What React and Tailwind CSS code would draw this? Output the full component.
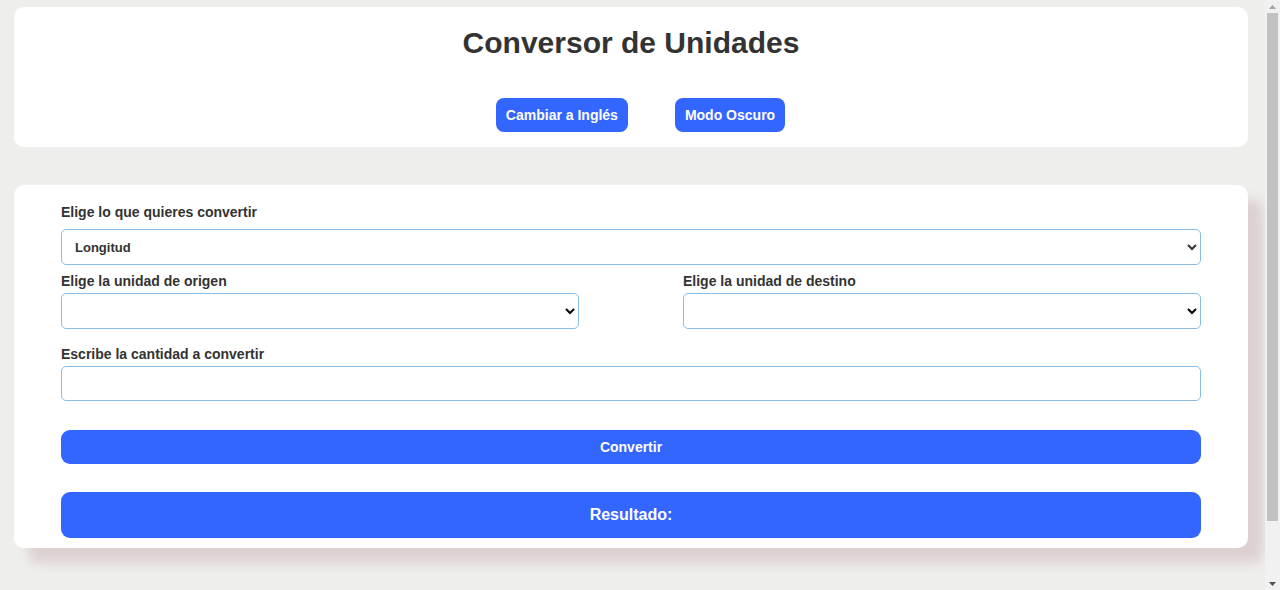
import React from 'react';

function Field({ label, children, className = '' }) {
  return (
    <div className={className}>
      <label className="block text-[14px] font-bold leading-4 text-[#333] mb-[4px]">{label}</label>
      {children}
    </div>
  );
}

// barra de desplazamiento dibujada (como en la captura)
function ScrollBar() {
  return (
    <div className="w-[15px] h-full bg-[#f1f1f1] flex flex-col items-center">
      <div className="h-[13px] w-full flex items-center justify-center">
        <svg width="7" height="4" viewBox="0 0 7 4"><path d="M0 4 L3.5 0 L7 4 Z" fill="#a3a3a3" /></svg>
      </div>
      <div className="w-[11px] h-[508px] bg-[#c1c1c1]" />
      <div className="flex-1" />
      <div className="h-[13px] w-full flex items-center justify-center">
        <svg width="7" height="4" viewBox="0 0 7 4"><path d="M0 0 L7 0 L3.5 4 Z" fill="#505050" /></svg>
      </div>
    </div>
  );
}

export default function App() {
  return (
    <div className="h-[590px] flex bg-[#eeeeec] overflow-hidden font-['Liberation_Sans',Arial,sans-serif]">
      <div className="flex-1 pt-[7px] pl-[14px] pr-[17px]">
        {/* Encabezado */}
        <header className="bg-white rounded-[10px] pt-[19px] pb-[15px]">
          <h1 className="text-center text-[30px] font-bold leading-[34px] text-[#333]">Conversor de Unidades</h1>
          <div className="mt-[38px] flex justify-center gap-[47px] pl-[19px]">
            <button className="h-[34px] px-[10px] rounded-[8px] bg-[#3366ff] text-white text-[14px] font-bold">
              Cambiar a Inglés
            </button>
            <button className="h-[34px] px-[10px] rounded-[8px] bg-[#3366ff] text-white text-[14px] font-bold">
              Modo Oscuro
            </button>
          </div>
        </header>

        {/* Formulario */}
        <main className="mt-[38px] bg-white rounded-[10px] px-[47px] pt-[19px] pb-[10px] shadow-[15px_15px_12px_#dcd0d0]">
          <label className="block text-[14px] font-bold leading-4 text-[#333] mb-[9px]">Elige lo que quieres convertir</label>
          <select
            defaultValue="longitud"
            className="block w-full h-[36px] border border-[#88bde6] rounded-[5px] bg-white pl-[9px] pr-[6px] text-[13px] font-bold text-[#333]"
          >
            <option value="longitud">Longitud</option>
            <option value="masa">Masa</option>
            <option value="temperatura">Temperatura</option>
          </select>

          <div className="mt-[8px] grid grid-cols-2 gap-[104px]">
            <Field label="Elige la unidad de origen">
              <select className="block w-full h-[36px] border border-[#88bde6] rounded-[5px] bg-white px-[6px] text-[13px]">
                <option value=""></option>
              </select>
            </Field>
            <Field label="Elige la unidad de destino">
              <select className="block w-full h-[36px] border border-[#88bde6] rounded-[5px] bg-white px-[6px] text-[13px]">
                <option value=""></option>
              </select>
            </Field>
          </div>

          <Field label="Escribe la cantidad a convertir" className="mt-[17px]">
            <input type="number" className="block w-full h-[35px] border border-[#88bde6] rounded-[5px] bg-white px-[8px] text-[14px]" />
          </Field>

          <button className="mt-[29px] block w-full h-[34px] rounded-[9px] bg-[#3366ff] text-white text-[14px] font-bold">
            Convertir
          </button>

          <div className="mt-[28px] h-[46px] rounded-[9px] bg-[#3366ff] flex items-center justify-center text-white text-[16px] font-bold">
            Resultado:
          </div>
        </main>
      </div>
      <ScrollBar />
    </div>
  );
}
